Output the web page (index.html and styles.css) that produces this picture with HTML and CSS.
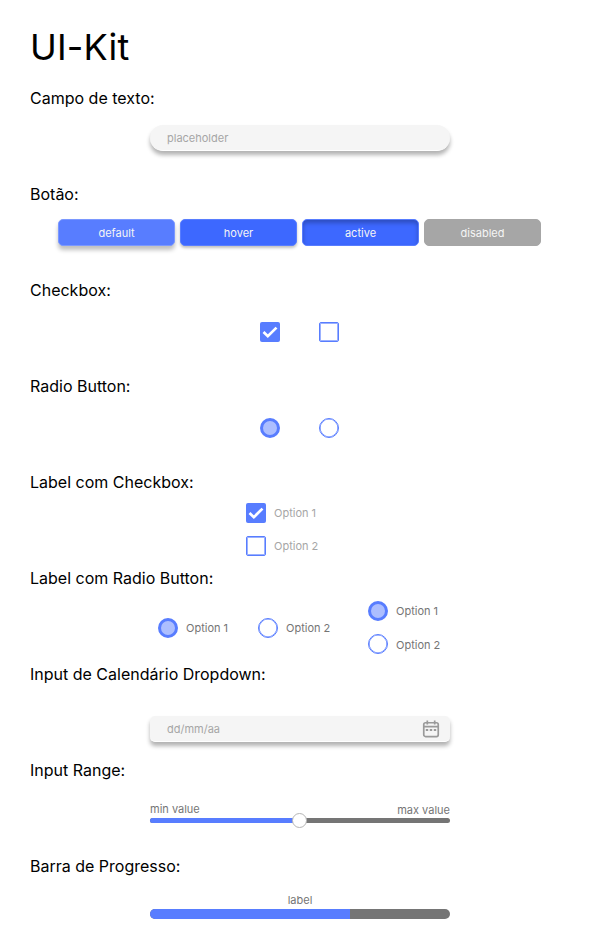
FILE: index.html
```html
<!DOCTYPE html>
<html lang="pt">
<head>
<meta charset="utf-8">
<title>UI-Kit</title>
<link rel="stylesheet" href="styles.css">
</head>
<body>
<main class="kit">
  <h1 class="title">UI-Kit</h1>

  <section class="section">
    <h2>Campo de texto:</h2>
    <div class="field pill"><span>placeholder</span></div>
  </section>

  <section class="section">
    <h2>Botão:</h2>
    <div class="buttons">
      <button class="btn">default</button>
      <button class="btn hover">hover</button>
      <button class="btn active">active</button>
      <button class="btn disabled" disabled>disabled</button>
    </div>
  </section>

  <section class="section">
    <h2>Checkbox:</h2>
    <div class="pair">
      <span class="check on"><svg viewBox="0 0 20 20"><path d="M3.5 10 7.8 14.2 16.5 5.6"/></svg></span>
      <span class="check"></span>
    </div>
  </section>

  <section class="section">
    <h2>Radio Button:</h2>
    <div class="pair">
      <span class="radio on"></span>
      <span class="radio"></span>
    </div>
  </section>

  <section class="section">
    <h2>Label com Checkbox:</h2>
    <div class="check-list">
      <label class="option light"><span class="check on"><svg viewBox="0 0 20 20"><path d="M3.5 10 7.8 14.2 16.5 5.6"/></svg></span>Option 1</label>
      <label class="option light"><span class="check"></span>Option 2</label>
    </div>
  </section>

  <section class="section">
    <h2>Label com Radio Button:</h2>
    <div class="radio-groups">
      <label class="option"><span class="radio on"></span>Option 1</label>
      <label class="option"><span class="radio"></span>Option 2</label>
      <div class="radio-column">
        <label class="option"><span class="radio on"></span>Option 1</label>
        <label class="option low"><span class="radio"></span><span>Option 2</span></label>
      </div>
    </div>
  </section>

  <section class="section">
    <h2>Input de Calendário Dropdown:</h2>
    <div class="field date">
      <span>dd/mm/aa</span>
      <svg class="calendar" viewBox="0 0 18 18"><rect x="1.75" y="2.75" width="14.5" height="13.8" rx="1.8"/><path d="M2 6.7H16M5.3 .5V4.5M12.7 .5V4.5"/><path class="dots" d="M3.8 10H6.2M7.8 10H10.2M11.8 10H14.2"/></svg>
    </div>
  </section>

  <section class="section">
    <h2>Input Range:</h2>
    <div class="range">
      <div class="range-labels"><span>min value</span><span class="max">max value</span></div>
      <div class="track"><div class="track-fill"></div><div class="thumb"></div></div>
    </div>
  </section>

  <section class="section">
    <h2>Barra de Progresso:</h2>
    <div class="progress">
      <span>label</span>
      <div class="bar"><div class="bar-fill"></div></div>
    </div>
  </section>
</main>
</body>
</html>
```
FILE: styles.css
```css
* { box-sizing: border-box; }
body {
  margin: 0;
  background: #fff;
  color: #000;
  font: 11px/16px Inter, "Liberation Sans", sans-serif;
}
.kit { width: 600px; height: 948px; padding-top: 23px; overflow: hidden; }
.title { margin: 0 0 15px 30px; font-size: 36px; line-height: 48px; font-weight: 400; letter-spacing: .2px; }
.section { height: 96px; }
h2 { margin: 0 0 0 30px; font-size: 16px; line-height: 24px; font-weight: 400; }

.field {
  display: flex;
  align-items: center;
  justify-content: space-between;
  width: 300px;
  height: 26px;
  margin: 15px auto 0;
  padding: 1px 10px 0 17px;
  border-bottom: 1px solid #fff;
  background: #f5f5f5;
  color: #a6a6a6;
  box-shadow: 0 4px 4px rgba(0, 0, 0, .3);
}
.pill { border-radius: 15px; }
.date { margin-top: 30px; border-radius: 5px; }
.calendar { width: 18px; height: 18px; fill: none; stroke: #9a9a9a; stroke-width: 1.7; }
.dots { stroke-width: 2; }

.buttons { display: flex; gap: 5px; margin: 13px 0 0 58px; }
.btn {
  width: 117px;
  height: 27px;
  padding: 0;
  border: 1px solid #7b98ff;
  border-radius: 5px;
  background: #587dff;
  color: #f5f5f5;
  font: inherit;
  box-shadow: 0 4px 4px rgba(0, 0, 0, .25);
}
.hover { background: #3d68ff; border-color: #587dff; box-shadow: 0 2px 3px rgba(0, 0, 0, .25); }
.active { background: #3d68ff; border-color: #587dff; box-shadow: inset 0 3px 4px rgba(0, 0, 0, .25); }
.disabled { background: #a6a6a6; border-color: #a6a6a6; box-shadow: none; }

.pair { display: flex; gap: 39px; margin: 20px 0 0 260px; }
.check, .radio { flex: none; width: 20px; height: 20px; border: 1px solid #587dff; }
.check { border-radius: 2px; box-shadow: inset 0 0 0 1px #9bb1ff; }
.check.on { border: 0; background: #587dff; box-shadow: none; }
.check svg { display: block; width: 20px; height: 20px; fill: none; stroke: #fff; stroke-width: 2.7; }
.radio { border-radius: 50%; box-shadow: inset 0 0 0 .6px #587dff; }
.radio.on { border-width: 3px; background: #acbeff; box-shadow: none; }

.option { display: flex; align-items: center; gap: 8px; height: 20px; color: #757575; }
.light { color: #a6a6a6; }
.check-list { display: grid; gap: 13px; margin: 9px 0 0 246px; }
.radio-groups { display: grid; grid-template-columns: 100px 110px 100px; align-items: center; height: 75px; margin-left: 158px; }
.radio-column { display: grid; gap: 13px; }
.low > span:last-child { padding-top: 2px; }

.range, .progress { width: 300px; margin: 0 auto; color: #757575; }
.range { padding-top: 19px; }
.range-labels { display: flex; justify-content: space-between; height: 17px; }
.max { padding-top: 1px; }
.track { position: relative; height: 5px; border-radius: 3px; background: #757575; }
.track-fill { width: 50%; height: 5px; border-radius: 3px 0 0 3px; background: #587dff; }
.thumb { position: absolute; top: -5px; left: 142px; width: 15px; height: 15px; border: 1px solid #b5b5b5; border-radius: 50%; background: #fff; }
.progress { padding-top: 14px; text-align: center; }
.progress > span { display: block; height: 17px; }
.bar { height: 10px; overflow: hidden; border-radius: 5px; background: #757575; }
.bar-fill { width: 200px; height: 10px; background: #587dff; }
```
